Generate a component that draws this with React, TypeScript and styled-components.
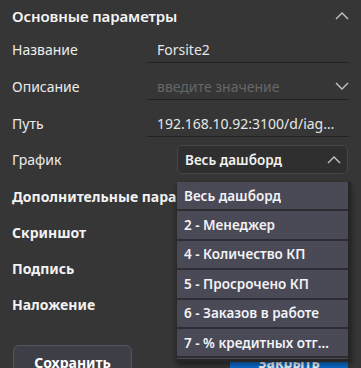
import React from 'react';
import styled, { createGlobalStyle } from 'styled-components';

const GlobalStyle = createGlobalStyle`
  html, body { margin: 0; padding: 0; background: #363636; }
  body {
    font-family: "Noto Sans", "Open Sans", sans-serif;
    color: #f0f0f0;
    overflow: hidden;
  }
  * { box-sizing: border-box; }
`;

const Panel = styled.div`
  width: 361px;
  height: 368px;
  overflow: hidden;
  background: #363636;
  padding: 0 12px;
  display: flex;
  flex-direction: column;
  & > * { flex-shrink: 0; }
`;

const Header = styled.div`
  height: 32px;
  display: flex;
  align-items: center;
  justify-content: space-between;
`;

const Title = styled.div`
  font-size: 15px;
  font-weight: 600;
  color: #f4f4f4;
  letter-spacing: -0.1px;
`;

const Fields = styled.div`
  display: flex;
  flex-direction: column;
  gap: 10px;
  margin-top: 4px;
`;

const FieldRow = styled.div<{ $pull?: number }>`
  display: grid;
  grid-template-columns: 135px 1fr;
  align-items: center;
  margin-top: ${(p) => (p.$pull ? `${-p.$pull}px` : '0')};
`;

const Label = styled.div`
  font-size: 14px;
  font-weight: 400;
  color: #ececec;
  white-space: nowrap;
`;

const Input = styled.div<{ $placeholder?: boolean }>`
  height: 27px;
  border-bottom: 1px solid #232323;
  padding: 0 0 0 10px;
  display: flex;
  align-items: center;
  gap: 8px;
  font-size: 14px;
  color: ${(p) => (p.$placeholder ? '#666666' : '#e6e6e6')};
  min-width: 0;
`;

const InputText = styled.span`
  flex: 1;
  min-width: 0;
  overflow: hidden;
  white-space: nowrap;
  text-overflow: ellipsis;
  padding-right: 10px;
`;

const SelectWrap = styled.div`
  position: relative;
  justify-self: end;
  width: 171px;
  margin-right: 1px;
`;

const SelectBox = styled.div`
  height: 29px;
  background: #2f2f2f;
  border: 1px solid #464646;
  border-radius: 5px;
  display: flex;
  align-items: center;
  justify-content: space-between;
  padding: 0 6px 0 7px;
  font-size: 13.5px;
  font-weight: 600;
  color: #f2f2f2;
`;

const Dropdown = styled.div`
  position: absolute;
  top: calc(100% + 8px);
  left: 0;
  width: 174px;
  height: 180px;
  background: #262626;
  padding: 0 3px 3px 0;
  z-index: 10;
  box-shadow: 0 3px 6px rgba(0, 0, 0, 0.45);
`;

const OptionList = styled.div`
  height: 177px;
  overflow-y: scroll;
  &::-webkit-scrollbar { width: 6px; }
  &::-webkit-scrollbar-track { background: #1d1d1d; }
  &::-webkit-scrollbar-thumb { background: #7a7a7a; }
`;

const Option = styled.div`
  height: 29.4px;
  border-bottom: 2px solid #2c2c31;
  background: #4a4a57;
  display: flex;
  align-items: center;
  padding: 0 14px 0 7px;
  font-size: 13.5px;
  font-weight: 600;
  color: #f2f2f6;
  white-space: nowrap;
  overflow: hidden;
  & > span {
    overflow: hidden;
    text-overflow: ellipsis;
  }
`;

const Sections = styled.div`
  display: flex;
  flex-direction: column;
  margin-top: 4px;
`;

const Section = styled.div`
  height: 36px;
  display: flex;
  align-items: center;
  font-size: 14px;
  font-weight: 700;
  color: #f2f2f2;
  white-space: nowrap;
`;

const Buttons = styled.div`
  display: flex;
  justify-content: space-between;
  margin-top: 23px;
  padding: 0 1px;
`;

const Button = styled.button<{ $primary?: boolean }>`
  width: ${(p) => (p.$primary ? '118px' : '119px')};
  height: 34px;
  flex-shrink: 0;
  border-radius: 6px;
  border: 1px solid ${(p) => (p.$primary ? '#0b6fd4' : '#55555e')};
  background: ${(p) => (p.$primary ? '#0b6fd4' : '#3e3e46')};
  color: #ffffff;
  font-family: inherit;
  font-size: 14px;
  font-weight: 700;
  padding: 0;
`;

const Chevron = ({ up }: { up?: boolean }) => (
  <svg width="14" height="8" viewBox="0 0 14 8" style={{ flexShrink: 0 }}>
    <polyline
      points={up ? '1,7 7,1 13,7' : '1,1 7,7 13,1'}
      fill="none"
      stroke="#c4c4c4"
      strokeWidth="1.4"
    />
  </svg>
);

const options = [
  'Весь дашборд',
  '2 - Менеджер',
  '4 - Количество КП',
  '5 - Просрочено КП',
  '6 - Заказов в работе',
  '7 - % кредитных отгрузок',
  '8 - Дебиторская задолженность',
  '9 - Отгрузки',
  '10 - Выручка',
  '11 - План продаж',
];

export default function App() {
  return (
    <>
      <GlobalStyle />
      <Panel>
        <Header>
          <Title>Основные параметры</Title>
          <Chevron up />
        </Header>
        <Fields>
          <FieldRow>
            <Label>Название</Label>
            <Input>
              <InputText>Forsite2</InputText>
            </Input>
          </FieldRow>
          <FieldRow>
            <Label>Описание</Label>
            <Input $placeholder>
              <InputText>введите значение</InputText>
              <Chevron />
            </Input>
          </FieldRow>
          <FieldRow>
            <Label>Путь</Label>
            <Input>
              <InputText>192.168.10.92:3100/d/iagVxQdSk/forsite2</InputText>
            </Input>
          </FieldRow>
          <FieldRow $pull={2}>
            <Label>График</Label>
            <SelectWrap>
              <SelectBox>
                <span>Весь дашборд</span>
                <Chevron up />
              </SelectBox>
              <Dropdown>
                <OptionList>
                  {options.map((o) => (
                    <Option key={o}>
                      <span>{o}</span>
                    </Option>
                  ))}
                </OptionList>
              </Dropdown>
            </SelectWrap>
          </FieldRow>
        </Fields>
        <Sections>
          <Section>Дополнительные параметры</Section>
          <Section>Скриншот</Section>
          <Section>Подпись</Section>
          <Section>Наложение</Section>
        </Sections>
        <Buttons>
          <Button>Сохранить</Button>
          <Button $primary>Закрыть</Button>
        </Buttons>
      </Panel>
    </>
  );
}
